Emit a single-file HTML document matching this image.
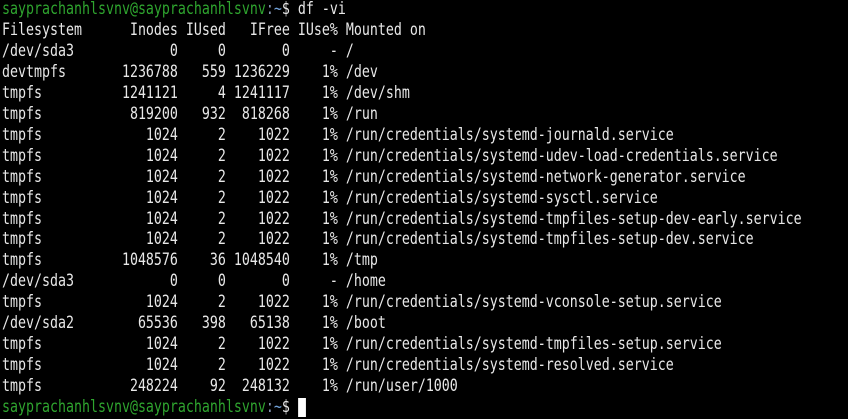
<!DOCTYPE html>
<html><head><meta charset="utf-8"><style>
html,body{margin:0;padding:0;background:#000;width:848px;height:419px;overflow:hidden}
pre{margin:0;position:absolute;left:2px;top:-1px;font-family:"DejaVu Sans Mono",monospace;font-size:17px;line-height:20.95px;color:#e8e8e8;transform:scaleX(0.7813);transform-origin:0 0}
.g{color:#2fa52f}.c{color:#8a9ab8}.b{color:#6f9fd6}
.cur{display:inline-block;width:10.24px;height:19px;background:#fff;vertical-align:-5px}
</style></head><body><pre><span class="g">sayprachanhlsvnv@sayprachanhlsvnv</span><span class="c">:</span><span class="b">~</span>$ df -vi
Filesystem      Inodes IUsed   IFree IUse% Mounted on
/dev/sda3            0     0       0     - /
devtmpfs       1236788   559 1236229    1% /dev
tmpfs          1241121     4 1241117    1% /dev/shm
tmpfs           819200   932  818268    1% /run
tmpfs             1024     2    1022    1% /run/credentials/systemd-journald.service
tmpfs             1024     2    1022    1% /run/credentials/systemd-udev-load-credentials.service
tmpfs             1024     2    1022    1% /run/credentials/systemd-network-generator.service
tmpfs             1024     2    1022    1% /run/credentials/systemd-sysctl.service
tmpfs             1024     2    1022    1% /run/credentials/systemd-tmpfiles-setup-dev-early.service
tmpfs             1024     2    1022    1% /run/credentials/systemd-tmpfiles-setup-dev.service
tmpfs          1048576    36 1048540    1% /tmp
/dev/sda3            0     0       0     - /home
tmpfs             1024     2    1022    1% /run/credentials/systemd-vconsole-setup.service
/dev/sda2        65536   398   65138    1% /boot
tmpfs             1024     2    1022    1% /run/credentials/systemd-tmpfiles-setup.service
tmpfs             1024     2    1022    1% /run/credentials/systemd-resolved.service
tmpfs           248224    92  248132    1% /run/user/1000
<span class="g">sayprachanhlsvnv@sayprachanhlsvnv</span><span class="c">:</span><span class="b">~</span>$ <span class="cur"></span></pre></body></html>
